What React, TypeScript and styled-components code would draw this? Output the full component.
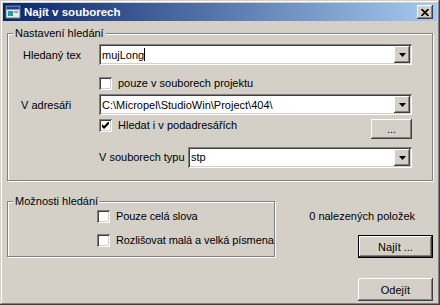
import React from 'react';
import styled, { createGlobalStyle } from 'styled-components';

const face = '#d4d0c8';
const shade = '#808080';
const dark = '#404040';

const GlobalStyle = createGlobalStyle`
    html, body {
        margin: 0;
        padding: 0;
        background: ${face};
    }
    body {
        font-family: "Liberation Sans", Arial, sans-serif;
        font-size: 11px;
        color: #000;
    }
`;

const Combo = ({ value, width, caret }: { value: string; width?: number; caret?: boolean }) => (
    <ComboBox $width={width}>
        <ComboText>
            {value}
            {caret && <Caret />}
        </ComboText>
        <DropButton>
            <svg width='7' height='4' viewBox='0 0 7 4'>
                <polygon points='0,0 7,0 3.5,4' fill='#000' />
            </svg>
        </DropButton>
    </ComboBox>
);

const Check = ({ label, checked }: { label: string; checked?: boolean }) => (
    <CheckRow>
        <CheckBox>
            {checked && (
                <svg width='7' height='7' viewBox='0 0 7 7'>
                    <polygon points='0,2 2,4 7,-1 7,2 2,7 0,5' fill='#000' />
                </svg>
            )}
        </CheckBox>
        <span>{label}</span>
    </CheckRow>
);

export default function App() {
    return (
        <>
            <GlobalStyle />
            <Window>
                <TitleBar>
                    <svg width='16' height='16' viewBox='0 0 16 16'>
                        <rect x='1' y='2' width='14' height='12' fill='#e8e8e8' stroke='#6b7b8c' />
                        <rect x='1.5' y='2.5' width='13' height='3' fill='#1c3f94' />
                        <rect x='3' y='7' width='5' height='5' fill='#2e9c8c' />
                        <rect x='9' y='7' width='4' height='2' fill='#9aa4ae' />
                    </svg>
                    <Title>Najít v souborech</Title>
                    <CloseButton>
                        <svg width='8' height='7' viewBox='0 0 8 7'>
                            <path d='M0.5 0 L7.5 7 M7.5 0 L0.5 7' stroke='#000' strokeWidth='1.7' />
                        </svg>
                    </CloseButton>
                </TitleBar>
                <Body>
                    <Group>
                        <Legend>Nastavení hledání</Legend>
                        <SearchGrid>
                            <Row $top={4}>
                                <Label>Hledaný tex</Label>
                                <Combo value='mujLong' caret />
                            </Row>
                            <Row $top={12}>
                                <span />
                                <Check label='pouze v souborech projektu' />
                            </Row>
                            <Row $top={4}>
                                <Label $shift={-2}>V adresáři</Label>
                                <Combo value='C:\Micropel\StudioWin\Project\404\' />
                            </Row>
                            <Row $top={4}>
                                <span />
                                <SplitCell>
                                    <Check label='Hledat i v podadresářích' checked />
                                    <SmallButton>...</SmallButton>
                                </SplitCell>
                            </Row>
                            <Row $top={8}>
                                <span />
                                <SplitCell>
                                    <Label>V souborech typu</Label>
                                    <Combo value='stp' width={224} />
                                </SplitCell>
                            </Row>
                        </SearchGrid>
                    </Group>
                    <BottomArea>
                        <OptionsGroup>
                            <Legend>Možnosti hledání</Legend>
                            <OptionList>
                                <Check label='Pouze celá slova' />
                                <Check label='Rozlišovat malá a velká písmena' />
                            </OptionList>
                        </OptionsGroup>
                        <ActionColumn>
                            <ResultText>0 nalezených položek</ResultText>
                            <PushButton $default>Najít ...</PushButton>
                            <PushButton $top={20}>Odejít</PushButton>
                        </ActionColumn>
                    </BottomArea>
                </Body>
            </Window>
        </>
    );
}

const Window = styled.div`
    width: 440px;
    height: 305px;
    box-sizing: border-box;
    padding: 3px;
    background: ${face};
    box-shadow: inset -1px -1px 0 ${dark}, inset 1px 1px 0 ${face}, inset -2px -2px 0 ${shade},
        inset 2px 2px 0 #fff;
    display: flex;
    flex-direction: column;
    overflow: hidden;
`;

const TitleBar = styled.div`
    height: 18px;
    display: flex;
    align-items: center;
    gap: 2px;
    padding: 0 4px 0 2px;
    background: linear-gradient(to right, #0a246a, #a6caf0);
`;

const Title = styled.span`
    flex: 1;
    color: #fff;
    font-weight: bold;
    font-size: 11.5px;
    padding-left: 1px;
`;

const CloseButton = styled.div`
    width: 16px;
    height: 14px;
    box-sizing: border-box;
    display: flex;
    align-items: center;
    justify-content: center;
    background: ${face};
    box-shadow: inset -1px -1px 0 ${dark}, inset 1px 1px 0 #fff, inset -2px -2px 0 ${shade};
`;

const Body = styled.div`
    flex: 1;
    padding: 6px 4px 0 4px;
    display: flex;
    flex-direction: column;
`;

const Group = styled.fieldset`
    margin: 0;
    padding: 0;
    min-width: 0;
    border: 1px solid ${shade};
    box-shadow: inset 1px 1px 0 #fff, 1px 1px 0 #fff;
`;

const Legend = styled.legend`
    margin-left: 5px;
    padding: 0 2px;
    line-height: 13px;
    background: ${face};
`;

const SearchGrid = styled.div`
    padding: 0 20px 12px 15px;
    display: flex;
    flex-direction: column;
`;

const Row = styled.div<{ $top: number }>`
    margin-top: ${({ $top }) => $top}px;
    display: grid;
    grid-template-columns: 76px 1fr;
    align-items: center;
`;

const Label = styled.span<{ $shift?: number }>`
    margin-left: ${({ $shift }) => $shift ?? 0}px;
    white-space: nowrap;
`;

const SplitCell = styled.div`
    display: flex;
    align-items: flex-start;
    justify-content: space-between;
    line-height: 13px;

    & > ${Label} {
        align-self: center;
    }
`;

const ComboBox = styled.div<{ $width?: number }>`
    width: ${({ $width }) => ($width ? `${$width}px` : '100%')};
    height: 21px;
    box-sizing: border-box;
    padding: 2px;
    display: flex;
    align-items: center;
    background: #fff;
    box-shadow: inset 1px 1px 0 ${shade}, inset -1px -1px 0 #fff, inset 2px 2px 0 ${dark},
        inset -2px -2px 0 ${face};
`;

const ComboText = styled.span`
    flex: 1;
    padding-left: 1px;
    display: flex;
    align-items: center;
    white-space: nowrap;
    overflow: hidden;
`;

const Caret = styled.span`
    width: 1px;
    height: 13px;
    background: #000;
`;

const DropButton = styled.div`
    width: 16px;
    height: 17px;
    box-sizing: border-box;
    display: flex;
    align-items: center;
    justify-content: center;
    background: ${face};
    box-shadow: inset -1px -1px 0 ${dark}, inset 1px 1px 0 #fff, inset -2px -2px 0 ${shade};
`;

const CheckRow = styled.label`
    display: flex;
    align-items: center;
    gap: 6px;
    line-height: 13px;
    white-space: nowrap;
`;

const CheckBox = styled.span`
    width: 13px;
    height: 13px;
    box-sizing: border-box;
    display: flex;
    align-items: center;
    justify-content: center;
    background: #fff;
    box-shadow: inset 1px 1px 0 ${shade}, inset -1px -1px 0 #fff, inset 2px 2px 0 ${dark},
        inset -2px -2px 0 ${face};
`;

const SmallButton = styled.div`
    width: 41px;
    height: 20px;
    box-sizing: border-box;
    display: flex;
    align-items: center;
    justify-content: center;
    background: ${face};
    box-shadow: inset -1px -1px 0 ${dark}, inset 1px 1px 0 #fff, inset -2px -2px 0 ${shade};
`;

const BottomArea = styled.div`
    margin-top: 14px;
    display: flex;
    align-items: flex-start;
`;

const OptionsGroup = styled(Group)`
    width: 268px;
    box-sizing: border-box;
`;

const OptionList = styled.div`
    padding: 2px 0 9px 89px;
    display: flex;
    flex-direction: column;
    gap: 11px;
    letter-spacing: -0.1px;
`;

const ActionColumn = styled.div`
    flex: 1;
    display: flex;
    flex-direction: column;
    align-items: flex-end;
`;

const ResultText = styled.span`
    margin: 15px 18px 0 0;
    line-height: 13px;
`;

const PushButton = styled.div<{ $default?: boolean; $top?: number }>`
    margin-top: ${({ $top }) => $top ?? 12}px;
    width: 75px;
    height: 23px;
    box-sizing: border-box;
    display: flex;
    align-items: center;
    justify-content: center;
    background: ${face};
    border: ${({ $default }) => ($default ? '1px solid #000' : 'none')};
    box-shadow: inset -1px -1px 0 ${dark}, inset 1px 1px 0 #fff, inset -2px -2px 0 ${shade};
`;
